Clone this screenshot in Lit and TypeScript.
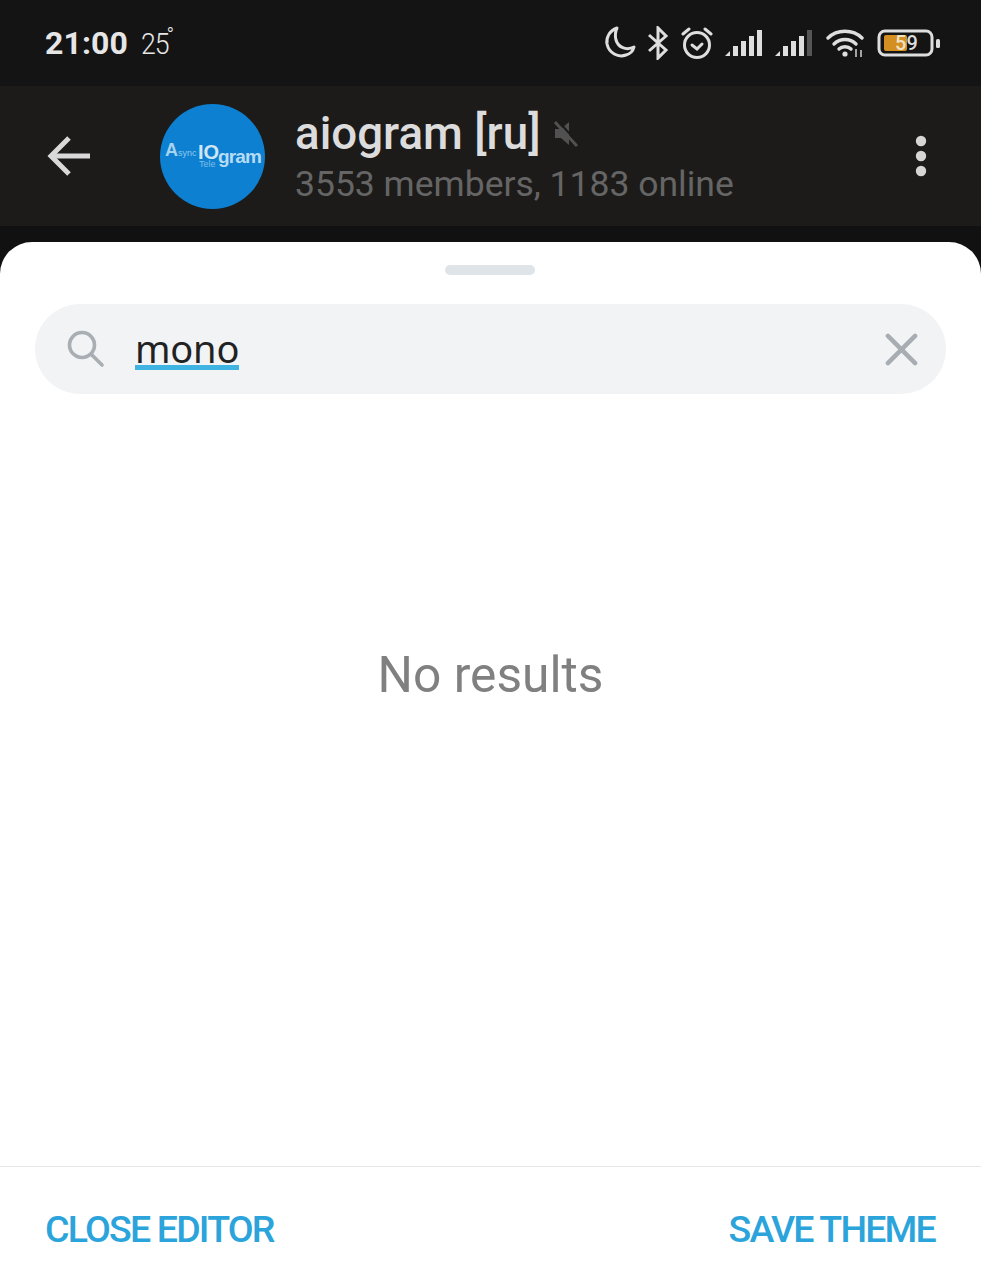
import { LitElement, css, html, svg } from 'lit';
import { customElement } from 'lit/decorators.js';

const signal = (lastDim: boolean) => svg`
    <svg class="signal" viewBox="0 0 37 28" width="37" height="28">
        <path d="M0 27 L5 22 V27 Z" fill="#dedede"/>
        <rect x="8" y="17" width="5" height="10" fill="#dedede"/>
        <rect x="16" y="12" width="5" height="15" fill="#dedede"/>
        <rect x="24" y="7" width="5" height="20" fill="#dedede"/>
        <rect x="32" y="1" width="5" height="26" fill="${lastDim ? '#555' : '#dedede'}"/>
    </svg>
`;

@customElement('app-root')
export class AppRoot extends LitElement {

    static styles = css`
        :host {
            display: block;
            width: 981px;
            height: 1280px;
            overflow: hidden;
            background: #111111;
            font-family: Roboto, "Liberation Sans", sans-serif;
        }

        .status {
            height: 86px;
            box-sizing: border-box;
            padding: 0 40px 0 45px;
            background: #141414;
            display: flex;
            align-items: center;
            justify-content: space-between;
            color: #e6e6e6;
        }

        .status__left {
            display: flex;
            align-items: baseline;
            gap: 13px;
        }

        .status__time {
            font-size: 32px;
            font-weight: 700;
            letter-spacing: 0.1px;
        }

        .status__temp {
            font-size: 29px;
            font-weight: 300;
            letter-spacing: -1.2px;
            transform: scaleX(0.92);
            transform-origin: left;
            position: relative;
        }

        .status__deg {
            position: absolute;
            left: 100%;
            top: 3px;
            margin-left: -2px;
            font-size: 22px;
            line-height: 12px;
        }

        .status__icons {
            display: flex;
            align-items: center;
            height: 40px;
        }

        .icon-bt { margin-left: 11px; }
        .icon-alarm { margin-left: 12px; }
        .icon-signal { margin-left: 12px; }
        .icon-signal2 { margin-left: 13px; }
        .icon-wifi { margin-left: 14px; }
        .icon-battery { margin-left: 13px; }

        .signal {
            display: block;
        }

        .header {
            height: 140px;
            background: #1c1b1a;
            display: flex;
            align-items: center;
            box-sizing: border-box;
            padding: 0 54px 0 47px;
        }

        .header__back {
            width: 47px;
            display: flex;
        }

        .avatar {
            width: 105px;
            height: 105px;
            border-radius: 50%;
            background: #0d80d2;
            margin-left: 66px;
            flex: none;
            display: block;
        }

        .header__text {
            margin-left: 30px;
            padding-top: 2px;
            flex: 1;
            min-width: 0;
        }

        .header__title {
            display: flex;
            align-items: center;
            gap: 12px;
            font-size: 45.7px;
            line-height: 52px;
            font-weight: 500;
            color: #dcdcdc;
        }

        .header__sub {
            font-size: 35.5px;
            line-height: 46px;
            margin-top: 1px;
            color: #656565;
        }

        .gap {
            height: 16px;
            background: #111111;
        }

        .sheet {
            height: 1038px;
            background: #ffffff;
            border-radius: 32px 32px 0 0;
            display: flex;
            flex-direction: column;
            box-sizing: border-box;
            padding-top: 23px;
        }

        .sheet__handle {
            width: 90px;
            height: 10px;
            border-radius: 5px;
            background: #dfe4e8;
            align-self: center;
            margin-right: 2px;
        }

        .search {
            margin: 29px 35px 0 35px;
            height: 90px;
            border-radius: 45px;
            background: #f1f3f5;
            display: flex;
            align-items: center;
            padding: 0 28px 0 32px;
        }

        .search__value {
            margin: 0 0 2px 30px;
            flex: 1;
            font-size: 38px;
            color: #222222;
            font-family: "Noto Sans", Roboto, sans-serif;
        }

        .search__value span {
            display: inline-block;
            line-height: 34px;
            border-bottom: 5px solid #3fb3e2;
            letter-spacing: -0.2px;
        }

        .empty {
            flex: 1;
            display: flex;
            align-items: center;
            justify-content: center;
            padding-bottom: 210px;
            font-size: 49.7px;
            color: #808080;
        }

        .footer {
            height: 114px;
            flex: none;
            box-sizing: border-box;
            border-top: 1px solid #e6e6e6;
            padding: 10px 46px 0 45px;
            display: flex;
            align-items: center;
            justify-content: space-between;
            font-size: 37.5px;
            font-weight: 500;
            letter-spacing: -1.8px;
            color: #2ba4db;
        }
    `;

    render() {
        return html`
            <div class="status">
                <div class="status__left">
                    <span class="status__time">21:00</span>
                    <span class="status__temp">25<span class="status__deg">°</span></span>
                </div>
                <div class="status__icons">
                    <svg viewBox="0 0 32 34" width="32" height="34" fill="none" stroke="#dedede" stroke-width="3">
                        <path d="M13 2 C5 5 2 12 3 18 C5 27 14 32 22 29 C26 28 29 25 30 21 C22 25 14 21 12 14 C11 10 11 6 13 2 Z" stroke-linejoin="round"/>
                    </svg>
                    <svg class="icon-bt" viewBox="0 0 22 34" width="22" height="34" fill="none" stroke="#dedede" stroke-width="3">
                        <path d="M2 9 L19 24 L11 32 V2 L19 10 L2 25"/>
                    </svg>
                    <svg class="icon-alarm" viewBox="0 0 32 34" width="32" height="34" fill="none" stroke="#dedede" stroke-width="3" stroke-linecap="round">
                        <circle cx="16" cy="19" r="12.5"/>
                        <path d="M11 19 L16 23 L21 18"/>
                        <path d="M2 8 L8 3 M30 8 L24 3"/>
                    </svg>
                    <span class="icon-signal">${signal(false)}</span>
                    <span class="icon-signal2">${signal(true)}</span>
                    <svg class="icon-wifi" viewBox="0 0 38 30" width="38" height="30" fill="none" stroke="#dedede" stroke-width="3.4" stroke-linecap="round">
                        <path d="M2 10 C11 1 27 1 36 10"/>
                        <path d="M8 16 C14 10 24 10 30 16"/>
                        <path d="M13 21 C16 18 22 18 25 21"/>
                        <circle cx="19" cy="26" r="2.6" fill="#dedede" stroke="none"/>
                        <path d="M30 21 V29 M35 22 V29" stroke-width="2" stroke-linecap="butt" opacity="0.7"/>
                    </svg>
                    <svg class="icon-battery" viewBox="0 0 64 28" width="64" height="28">
                        <rect x="2" y="2" width="53" height="24" rx="6" fill="none" stroke="#dedede" stroke-width="3"/>
                        <rect x="7" y="6" width="23" height="16" rx="2" fill="#d48f22"/>
                        <rect x="59" y="10" width="4" height="9" rx="1.5" fill="#dedede"/>
                        <text x="18" y="21" font-size="20" font-weight="500" font-family="Roboto, sans-serif" fill="#f0e2c4">5<tspan fill="#dedede">9</tspan></text>
                    </svg>
                </div>
            </div>
            <div class="header">
                <div class="header__back">
                    <svg viewBox="0 0 44 40" width="44" height="40" fill="none" stroke="#d9d9d9" stroke-width="5">
                        <path d="M43 20 H5"/>
                        <path d="M22 2 L4 20 L22 38"/>
                    </svg>
                </div>
                <svg class="avatar" viewBox="0 0 105 105">
                    <text x="5" y="52" font-size="18" font-weight="700" font-family="Liberation Sans, sans-serif" fill="#a6d3ee">A</text>
                    <text x="18" y="52" font-size="9" font-family="Liberation Sans, sans-serif" fill="#8fc8ea">sync</text>
                    <text x="38" y="55" font-size="20" font-weight="700" font-family="Liberation Sans, sans-serif" fill="#cfe6f5">IO</text>
                    <text x="39" y="63" font-size="9" font-family="Liberation Sans, sans-serif" fill="#7dbde6">Tele</text>
                    <text x="58" y="59" font-size="19" font-weight="700" font-family="Liberation Sans, sans-serif" fill="#b7dcf2" textLength="44">gram</text>
                </svg>
                <div class="header__text">
                    <div class="header__title">
                        <span>aiogram [ru]</span>
                        <svg viewBox="0 0 26 28" width="26" height="28">
                            <path d="M2 9 H8 L16 2 V25 L8 18 H2 Z" fill="#515151"/>
                            <path d="M2 2 L24 26" stroke="#515151" stroke-width="3"/>
                            <path d="M6 2 L26 24" stroke="#1c1b1a" stroke-width="2"/>
                        </svg>
                    </div>
                    <div class="header__sub">3553 members, 1183 online</div>
                </div>
                <svg viewBox="0 0 12 42" width="12" height="42">
                    <circle cx="6" cy="6" r="5.2" fill="#d6d6d6"/>
                    <circle cx="6" cy="21" r="5.2" fill="#d6d6d6"/>
                    <circle cx="6" cy="36" r="5.2" fill="#d6d6d6"/>
                </svg>
            </div>
            <div class="gap"></div>
            <div class="sheet">
                <div class="sheet__handle"></div>
                <div class="search">
                    <svg viewBox="0 0 38 38" width="38" height="38" fill="none" stroke="#a9aeb3" stroke-width="3.6" stroke-linecap="round">
                        <circle cx="15" cy="15" r="12.5"/>
                        <path d="M25 25 L35 35"/>
                    </svg>
                    <div class="search__value"><span>mono</span></div>
                    <svg viewBox="0 0 34 34" width="33" height="33" fill="none" stroke="#a7adb3" stroke-width="4.6" stroke-linecap="round">
                        <path d="M3 3 L31 31 M31 3 L3 31"/>
                    </svg>
                </div>
                <div class="empty">No results</div>
                <div class="footer">
                    <span>CLOSE EDITOR</span>
                    <span>SAVE THEME</span>
                </div>
            </div>
        `;
    }
}
